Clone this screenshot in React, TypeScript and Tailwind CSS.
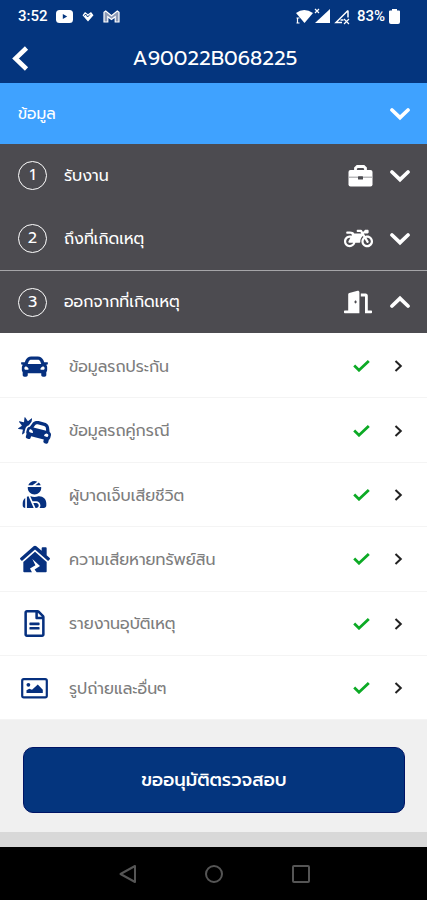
import React from "react";
import {
  FaCar,
  FaCarCrash,
  FaDoorOpen,
  FaHouseDamage,
  FaMotorcycle,
  FaRegFileAlt,
  FaUserInjured,
} from "react-icons/fa";

type ChevronProps = { up?: boolean };

const Chevron = ({ up }: ChevronProps) => (
  <svg
    className="w-[20px] h-[14px] shrink-0"
    viewBox="0 0 20 14"
    fill="none"
    stroke="white"
    strokeWidth="3.7"
    strokeLinecap="round"
  >
    <path d={up ? "M2 11 10 3.4l8 7.6" : "M2 3 10 10.6l8-7.6"} />
  </svg>
);

const BriefcaseIcon = () => (
  <svg className="ml-[4px] h-[22px] w-[25px]" viewBox="0 0 25 22">
    <path d="M7.5 6V3.2l1.8-1.7h6.4l1.8 1.7V6" fill="none" stroke="white" strokeWidth="2.8" />
    <rect x="0.5" y="5" width="24" height="16.5" rx="2" fill="white" />
    <path d="M0.5 12.2h24" stroke="#a9a9ac" strokeWidth="1.2" />
    <rect x="10" y="11.2" width="5" height="3.4" rx="0.6" fill="#4c4b50" />
  </svg>
);

const ImageIcon = () => (
  <svg className="w-[27px] h-[21px]" viewBox="0 0 27 21">
    <rect x="1.2" y="1.2" width="24.6" height="18.2" rx="1.6" fill="none" stroke="currentColor" strokeWidth="2.2" />
    <circle cx="7.4" cy="6.8" r="1.9" fill="currentColor" />
    <path d="M5.5 14.9v-2.6l2.8-1.5 2.7 1 5.8-5.4 5 5.4v3.1z" fill="currentColor" />
  </svg>
);

const steps = [
  { no: 1, label: "รับงาน", icon: <BriefcaseIcon /> },
  { no: 2, label: "ถึงที่เกิดเหตุ", icon: <FaMotorcycle size={29} /> },
  { no: 3, label: "ออกจากที่เกิดเหตุ", icon: <FaDoorOpen size={28} />, open: true },
];

const items = [
  { label: "ข้อมูลรถประกัน", icon: <FaCar size={27} /> },
  { label: "ข้อมูลรถคู่กรณี", icon: <FaCarCrash size={33} /> },
  { label: "ผู้บาดเจ็บเสียชีวิต", icon: <FaUserInjured size={27} /> },
  { label: "ความเสียหายทรัพย์สิน", icon: <FaHouseDamage size={30} /> },
  { label: "รายงานอุบัติเหตุ", icon: <FaRegFileAlt size={27} /> },
  { label: "รูปถ่ายและอื่นๆ", icon: <ImageIcon /> },
];

const StatusBar = () => (
  <div className="flex h-[33px] items-center pl-[18px] pr-[26px] font-['Roboto',sans-serif] text-[15px] font-medium text-white">
    <span>3:52</span>
    <svg className="ml-[8px] h-[13px] w-[17px]" viewBox="0 0 17 13">
      <rect width="17" height="13" rx="3.5" fill="white" />
      <path d="M6.8 4v5l4.4-2.5z" fill="#04357e" />
    </svg>
    <svg className="ml-[9px] h-[11px] w-[12px]" viewBox="0 0 12 11">
      <path d="M0.5 4.3 3 1 6 3.2 9 1l2.5 3.3L6 10.4z" fill="white" />
      <path d="m2 4.6 2-1.4L5.6 6 8 3.4" fill="none" stroke="#04357e" strokeWidth="0.9" />
    </svg>
    <svg className="ml-[9px] h-[13px] w-[17px]" viewBox="0 0 17 13">
      <path
        d="M1 12V2.2L2.7 1 8.5 5.8 14.3 1 16 2.2V12h-3.8V6.8L8.5 9.6 4.8 6.8V12z"
        fill="#8d9bb7"
        stroke="white"
        strokeWidth="1.2"
      />
    </svg>
    <svg className="ml-auto h-[17px] w-[54px]" viewBox="0 0 54 17">
      <path d="M0 5Q8-1 17 5L8.5 15z" fill="white" />
      <path d="M1.5 10v5m-1-5h3m-3 5h3" stroke="white" strokeWidth="1.2" fill="none" />
      <path d="M19 1l4 4m0-4-4 4" stroke="white" strokeWidth="1.2" fill="none" />
      <path d="M34 1v14H19z" fill="white" />
      <path d="M52 2.5v7M46 14.5h-6l12-12" fill="none" stroke="white" strokeWidth="1.5" />
      <path d="M44.5 12h3" stroke="white" strokeWidth="1.5" />
      <path d="m48 11 5 5m0-5-5 5" stroke="white" strokeWidth="1.2" />
    </svg>
    <span className="ml-[7px]">83%</span>
    <svg className="ml-[4px] mr-[1px] h-[15px] w-[11px]" viewBox="0 0 11 15">
      <path d="M3 0h5v1.6H10a1 1 0 0 1 1 1V13a2 2 0 0 1-2 2H2a2 2 0 0 1-2-2V2.6a1 1 0 0 1 1-1h2z" fill="white" />
    </svg>
  </div>
);

const App = () => {
  return (
    <div className="flex h-[900px] w-[427px] flex-col overflow-hidden bg-[#f0f0f0] font-['Prompt','Kanit','Noto_Sans_Thai','Noto_Sans',sans-serif]">
      <header className="h-[83px] shrink-0 bg-[#04357e]">
        <StatusBar />
        <div className="flex h-[50px] items-center pl-[12px] pr-[12px]">
          <svg className="h-[25px] w-[17px]" viewBox="0 0 17 25">
            <path d="M14.5 2 3.5 12.5l11 10.5" fill="none" stroke="white" strokeWidth="4.6" />
          </svg>
          <h1 className="flex-1 pr-[14px] pt-[2px] text-center text-[20.3px] text-white">A90022B068225</h1>
        </div>
      </header>

      <div className="flex h-[61px] shrink-0 items-center justify-between bg-[#3fa2ff] pl-[18px] pr-[17px] text-[15.5px] text-white">
        <span className="pt-[3px]">ข้อมูล</span>
        <Chevron />
      </div>

      <div className="h-[189px] shrink-0 bg-[#4c4b50] text-white">
        {steps.map((s) => (
          <div
            key={s.no}
            className={`flex h-[63px] items-center pl-[18px] pr-[17px] ${s.open ? "border-t border-[#a5a5a8]" : ""}`}
          >
            <span className="flex h-[29px] w-[29px] items-center justify-center rounded-full border-[1.5px] border-white pb-[1px] text-[16px]">
              {s.no}
            </span>
            <span className="ml-[17px] flex-1 whitespace-nowrap pt-[2px] text-[15.8px]">{s.label}</span>
            <span className="mr-[17px] flex w-[30px] justify-center">{s.icon}</span>
            <Chevron up={s.open} />
          </div>
        ))}
      </div>

      <ul className="h-[387px] shrink-0 bg-white pt-[1px]">
        {items.map((item) => (
          <li
            key={item.label}
            className="flex h-[64.4px] items-center border-b border-[#f4f4f4] pr-[24px] pt-[1px]"
          >
            <span className="flex w-[69px] justify-center text-[#06307f]">{item.icon}</span>
            <span className="flex-1 whitespace-nowrap pt-[3px] text-[15.8px] text-[#7d7d7d]">{item.label}</span>
            <svg className="h-[12px] w-[17px]" viewBox="0 0 17 12">
              <path d="M1.2 5.6 6 10.2 15.8 1" fill="none" stroke="#0caa25" strokeWidth="2.8" />
            </svg>
            <svg className="ml-[24px] h-[12px] w-[9px]" viewBox="0 0 9 12">
              <path d="m1.5 1 5.3 5-5.3 5" fill="none" stroke="#222" strokeWidth="2" />
            </svg>
          </li>
        ))}
      </ul>

      <div className="h-[112px] shrink-0 px-[23px] pt-[27px]">
        <button className="h-[66px] w-[382px] rounded-[10px] border border-[#001465] bg-[#04357e] pt-[1px] text-[18px] font-medium text-white">
          ขออนุมัติตรวจสอบ
        </button>
      </div>
      <div className="h-[15px] shrink-0 bg-[#d8d8d8]" />

      <nav className="flex h-[53px] shrink-0 items-center bg-black pl-[119px] text-[#555]">
        <svg className="h-[20px] w-[18px]" viewBox="0 0 18 20" fill="none" stroke="currentColor" strokeWidth="2">
          <path d="M16 2v16L1.5 10z" strokeLinejoin="round" />
        </svg>
        <span className="ml-[68px] h-[18px] w-[18px] rounded-full border-2 border-current" />
        <span className="ml-[69px] h-[18px] w-[18px] rounded-[2px] border-2 border-current" />
      </nav>
    </div>
  );
};

export default App;
